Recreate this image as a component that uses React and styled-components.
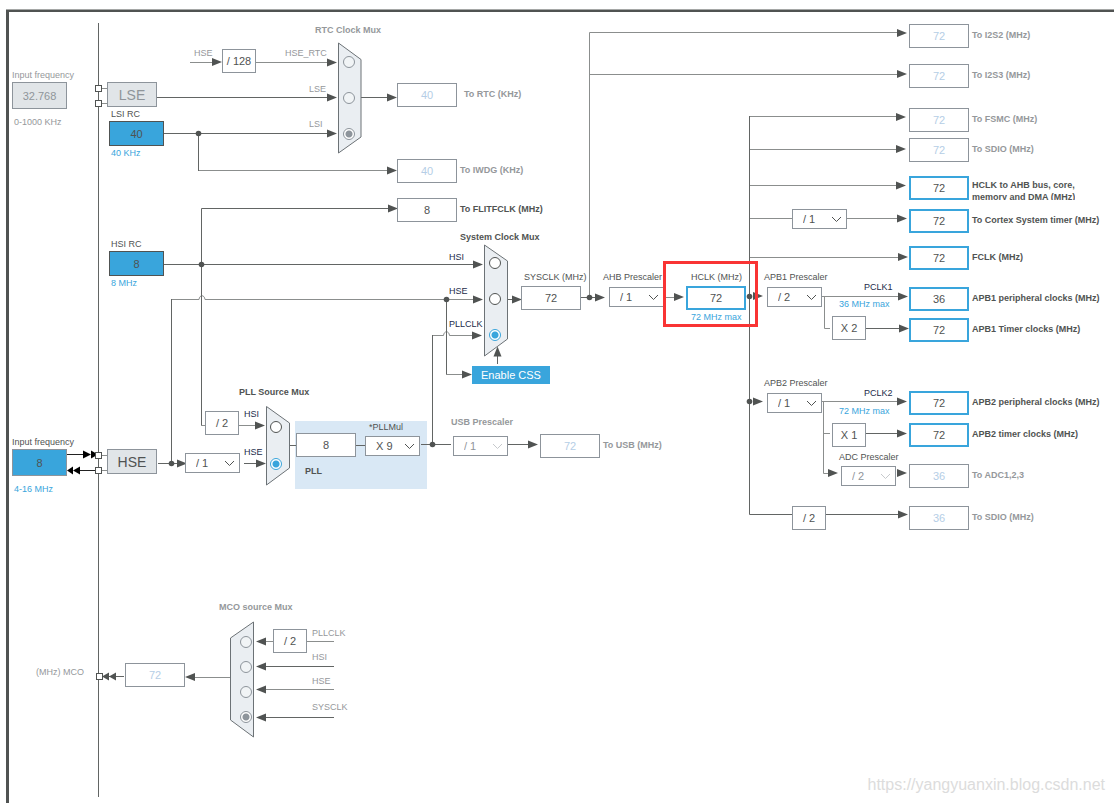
import React, { useState } from "react";
import styled, { createGlobalStyle, css } from "styled-components";

const ink = "#505352";
const muted = "#95989b";
const blue = "#39a5dc";
const edge = "#8d949b";

const GlobalStyle = createGlobalStyle`
  * {
    box-sizing: border-box;
  }

  body {
    margin: 0;
    background: #fff;
    color: ${ink};
    font-family: "Liberation Sans", Arial, sans-serif;
    font-size: 9px;
  }
`;

const Canvas = styled.main`
  position: relative;
  min-height: 100vh;
  overflow: hidden;

  &::before {
    content: "";
    position: absolute;
    inset: 10px 0 0 6px;
    border-left: 3px solid ${ink};
    border-top: 2px solid ${ink};
    box-shadow: 0 -1px 0 #a5a7a6;
  }
`;

/* every node of the clock tree sits at its own spot on the canvas */
const node = css`
  position: absolute;
  left: ${(p) => p.$x}px;
  top: ${(p) => p.$y}px;
`;

const Wires = styled.svg`
  position: absolute;
  left: 0;
  top: 0;
  overflow: visible;
  pointer-events: none;
`;

const tones = {
  ink,
  muted,
  blue,
  signal: "#1c2b4a",
};

const Caption = styled.label`
  color: ${(p) => tones[p.$tone || "ink"]};
  font-weight: ${(p) => (p.$bold ? 700 : 400)};
  line-height: 12px;
  white-space: pre;
`;

const FreeCaption = styled(Caption)`
  ${node}
`;

/* caption above, control, optional limit below */
const Stack = styled.div`
  ${node}
  display: flex;
  flex-direction: column;
  align-items: flex-start;
`;

const StackTitle = styled(Caption)`
  padding-left: ${(p) => p.$indent || 0}px;
  margin-bottom: ${(p) => p.$gap}px;
`;

const StackHint = styled(Caption)`
  padding-left: ${(p) => p.$indent || 0}px;
  margin-top: ${(p) => p.$gap}px;
`;

/* frequency box with its name on the right */
const OutputRow = styled.div`
  ${node}
  display: flex;
  align-items: center;
  gap: ${(p) => p.$gap || 3}px;
`;

const OutputName = styled(Caption)`
  padding-bottom: 2px;
  ${(p) =>
    p.$clip &&
    css`
      align-self: flex-end;
      height: 21px;
      padding: 0;
      overflow: hidden;
    `}
`;

const Frequency = styled.input`
  width: 60px;
  height: 24px;
  padding: 0;
  border: 1px solid ${edge};
  border-radius: 0;
  background: #fff;
  color: ${(p) => (p.$off ? "#b5cee6" : ink)};
  font: inherit;
  font-size: 11px;
  text-align: center;
  outline: none;
  ${(p) => p.$active && `border: 2px solid ${blue};`}
`;

const FreeFrequency = styled(Frequency)`
  ${node}
`;

const Source = styled(Frequency)`
  width: 55px;
  height: ${(p) => (p.$tall ? 27 : 25)}px;
  border-color: ${(p) => (p.$tall ? edge : ink)};
  background: ${(p) => (p.$off ? "#e1e5e8" : blue)};
  color: ${(p) => (p.$off ? "#8f959a" : ink)};
`;

const Oscillator = styled.div`
  ${node}
  display: flex;
  align-items: center;
  justify-content: center;
  width: 50px;
  height: 25px;
  border: 1px solid ${edge};
  background: #e1e5e8;
  color: ${(p) => (p.$off ? "#8f959a" : ink)};
  font-size: 14px;
`;

const Factor = styled.div`
  ${node}
  display: flex;
  align-items: center;
  justify-content: center;
  width: 34px;
  height: 24px;
  border: 1px solid ${edge};
  background: #fff;
  font-size: 11px;
`;

const PrescalerBox = styled.div`
  display: grid;
  align-items: center;
  width: 55px;
  height: 20px;
  margin-left: ${(p) => p.$shift || 0}px;
  color: ${(p) => (p.$off ? "#8f959a" : ink)};

  select,
  svg {
    grid-area: 1 / 1;
  }

  select {
    appearance: none;
    width: 100%;
    height: 20px;
    padding: 0 0 0 10px;
    border: 1px solid ${edge};
    border-radius: 0;
    background: #fff;
    color: inherit;
    font: inherit;
    font-size: 11px;
  }

  svg {
    justify-self: end;
    margin-right: 5px;
    pointer-events: none;
    opacity: ${(p) => (p.$off ? 0.5 : 1)};
  }
`;

const Radio = styled.input`
  ${node}
  appearance: none;
  width: 12px;
  height: 12px;
  margin: 0;
  border: 1px solid ${(p) => (p.$off ? edge : ink)};
  border-radius: 50%;
  background: ${(p) => (p.$off ? "#f1f4f6" : "#fff")};

  &:checked {
    border-color: ${(p) => (p.$off ? edge : blue)};
    background: radial-gradient(circle, ${(p) => (p.$off ? edge : blue)} 3px, #fff 4px);
  }
`;

const PllPanel = styled.div`
  ${node}
  width: 132px;
  height: 68px;
  background: #d9e8f5;
`;

const CssButton = styled.button`
  ${node}
  width: 78px;
  height: 18px;
  padding: 0;
  border: 0;
  background: ${blue};
  color: #fff;
  font: inherit;
  font-size: 11px;
`;

const Highlight = styled.div`
  ${node}
  width: 95px;
  height: 66px;
  border: 3px solid #f93434;
  pointer-events: none;
`;

const Watermark = styled.a`
  position: absolute;
  right: 9px;
  bottom: 8px;
  color: #dcdcdc;
  font-size: 16px;
  line-height: 20px;
  text-decoration: none;
`;

const darkWires = [
  "M98.5 23V797",
  "M157 97.5H328",
  "M164 133.5H328",
  "M198.5 133V171",
  "M361 97.5H388",
  "M164 264.5H474",
  "M389 208.5H201.5V425",
  "M171.5 463V299",
  "M446.5 299V374",
  "M432.5 444V335",
  "M508 299.5H513",
  "M497.5 364V356",
  "M581 297.5H595",
  "M749.5 116V514.5H792",
  "M158 463.5H178",
  "M244 463.5H256",
  "M290 445.5H296",
  "M356 445.5H365",
  "M421 444.5H451",
  "M508 444.5H528",
  "M866 328.5H900",
  "M866 433.5H898",
  "M826 514.5H898",
  "M109 676.5H124",
  "M266 666.5H334",
  "M266 717.5H334",
];

const lightWires = [
  "M190 62.5H213",
  "M256 62.5H328",
  "M198 170.5H387",
  "M201 425.5H205",
  "M239 425.5H256",
  "M171 299.5H199C199.500 294.500 204.500 294.500 205 299.500H474",
  "M446 374.5H462",
  "M432 335.5H443.500C444 330.500 449 330.500 449.500 335.500H473",
  "M589.5 297V32.5H898",
  "M589 74.5H898",
  "M664 297.5H675",
  "M749 116.5H897",
  "M749 149.5H897",
  "M749 185.5H897",
  "M749 218.5H792",
  "M847 218.5H897",
  "M749 257.5H898",
  "M822 296.5H898",
  "M824.5 296V328.5H830",
  "M822 401.5H898",
  "M823.5 401V473.5H828",
  "M823 433.5H830",
  "M101 88.5H107",
  "M101 103.5H107",
  "M101 455.5H107",
  "M101 470.5H107",
  "M195 677.5H230",
  "M266 641.5H273",
  "M307 641.5H334",
  "M266 689.5H334",
];

const blackWires = ["M67 454.5H84", "M80 470.5H95"];

// [tip x, tip y, direction, length]
const arrows = [
  [222, 62],
  [337, 62.5],
  [337, 97.5],
  [337, 133.5],
  [397, 97.5],
  [397, 170.5],
  [398, 208.5],
  [483, 264.5],
  [483, 299.5],
  [482, 335.5],
  [472, 374.5],
  [522, 299.5],
  [497.5, 346.5, "up"],
  [605, 297.5],
  [684, 297],
  [907, 33],
  [907, 74],
  [906, 117],
  [906, 149],
  [906, 185.5],
  [907, 218.5],
  [908, 257],
  [763, 296],
  [908, 296.5],
  [909, 328.5],
  [763, 401.5],
  [907, 401.5],
  [907, 433.5],
  [838, 473],
  [907, 473],
  [908, 514.5],
  [187, 463.5],
  [266, 463.5],
  [265, 425.5],
  [538, 444.5],
  [102, 676.5, "left", 7],
  [109, 676.5, "left", 7],
  [185, 677, "left"],
  [256, 641.5, "left"],
  [256, 666.5, "left"],
  [256, 689.5, "left"],
  [256, 717.5, "left"],
];

const blackArrows = [
  [91, 454.5, "right", 8],
  [98, 454.5, "right", 7],
  [67, 470.5, "left", 6],
  [73, 470.5, "left", 7],
];

const dots = [
  [198.5, 133.5],
  [201.5, 264.5],
  [446.5, 299.5],
  [171.5, 463.5],
  [432.5, 444.5],
  [589.5, 297.5],
  [749.5, 296.5],
  [749.5, 401.5],
];

const ports = [
  [95.5, 85.5],
  [95.5, 100.5],
  [95.5, 452.5],
  [95.5, 467.5],
  [96.5, 673.5],
];

const muxShapes = [
  "338.5,43 361,59.5 361,137 338.5,153",
  "484.5,245 507.5,261 507.5,339 484.5,356",
  "266.5,406.5 289.5,423 289.5,468 266.5,485",
  "253.5,622 230.5,638 230.5,720 253.5,737",
];

const angle = { right: 0, left: 180, up: -90 };

const Arrow = ({ x, y, dir = "right", size = 10 }) => (
  <polygon
    points={`0,0 ${-size},-4 ${-size},4`}
    transform={`translate(${x} ${y}) rotate(${angle[dir]})`}
  />
);

const captions = [
  { x: 194, y: 47, text: "HSE", tone: "muted" },
  { x: 285, y: 47, text: "HSE_RTC", tone: "muted", id: "rtc-0" },
  { x: 309, y: 83, text: "LSE", tone: "muted", id: "rtc-1" },
  { x: 309, y: 118, text: "LSI", tone: "muted", id: "rtc-2" },
  { x: 315, y: 24, text: "RTC Clock Mux", tone: "muted", bold: true },
  { x: 460, y: 231, text: "System Clock Mux", bold: true },
  { x: 449, y: 251, text: "HSI", tone: "signal", id: "sys-0" },
  { x: 449, y: 285, text: "HSE", tone: "signal", id: "sys-1" },
  { x: 449, y: 318, text: "PLLCLK", tone: "signal", id: "sys-2" },
  { x: 864, y: 281, text: "PCLK1", tone: "signal", id: "pclk1" },
  { x: 839, y: 298, text: "36 MHz max", tone: "blue", id: "pclk1" },
  { x: 864, y: 387, text: "PCLK2", tone: "signal", id: "pclk2" },
  { x: 839, y: 405, text: "72 MHz max", tone: "blue", id: "pclk2" },
  { x: 239, y: 386, text: "PLL Source Mux", bold: true },
  { x: 244, y: 408, text: "HSI", tone: "signal", id: "pll-0" },
  { x: 244, y: 446, text: "HSE", tone: "signal", id: "pll-1" },
  { x: 305, y: 465, text: "PLL", bold: true, id: "pll" },
  { x: 219, y: 601, text: "MCO source Mux", tone: "muted", bold: true },
  { x: 36, y: 666, text: "(MHz) MCO", tone: "muted", id: "mco" },
  { x: 312, y: 627, text: "PLLCLK", tone: "muted", id: "mco-0" },
  { x: 312, y: 651, text: "HSI", tone: "muted", id: "mco-1" },
  { x: 312, y: 675, text: "HSE", tone: "muted", id: "mco-2" },
  { x: 312, y: 701, text: "SYSCLK", tone: "muted", id: "mco-3" },
];

const outputs = [
  { id: "to-rtc", x: 397, y: 83, value: "40", text: "To RTC (KHz)", off: true, gap: 7 },
  { id: "to-iwdg", x: 397, y: 159, value: "40", text: "To IWDG (KHz)", off: true },
  { id: "to-flitf", x: 397, y: 198, value: "8", text: "To FLITFCLK (MHz)", plain: true },
  { id: "to-usb", x: 540, y: 434, value: "72", text: "To USB (MHz)", off: true },
  { id: "i2s2", x: 909, y: 24, value: "72", text: "To I2S2 (MHz)", off: true },
  { id: "i2s3", x: 909, y: 64, value: "72", text: "To I2S3 (MHz)", off: true },
  { id: "fsmc", x: 909, y: 108, value: "72", text: "To FSMC (MHz)", off: true },
  { id: "sdio", x: 909, y: 138, value: "72", text: "To SDIO (MHz)", off: true },
  { id: "ahb-bus", x: 909, y: 176, value: "72", text: "HCLK to AHB bus, core,\nmemory and DMA (MHz)", clip: true },
  { id: "cortex", x: 909, y: 209, value: "72", text: "To Cortex System timer (MHz)" },
  { id: "fclk", x: 909, y: 246, value: "72", text: "FCLK (MHz)" },
  { id: "pclk1", x: 909, y: 287, value: "36", text: "APB1 peripheral clocks (MHz)" },
  { id: "tim1", x: 909, y: 318, value: "72", text: "APB1 Timer clocks (MHz)" },
  { id: "pclk2", x: 909, y: 391, value: "72", text: "APB2 peripheral clocks (MHz)" },
  { id: "tim2", x: 909, y: 423, value: "72", text: "APB2 timer clocks (MHz)" },
  { id: "to-adc", x: 909, y: 464, value: "36", text: "To ADC1,2,3", off: true },
  { id: "sdio2", x: 909, y: 506, value: "36", text: "To SDIO (MHz)", off: true },
];

const inputs = [
  { id: "lse-in", y: 69, value: "32.768", range: "0-1000 KHz", off: true },
  { id: "hse-in", y: 436, value: "8", range: "4-16 MHz" },
];

const internals = [
  { id: "lsi", y: 108, value: "40", title: "LSI RC", range: "40 KHz" },
  { id: "hsi", y: 238, value: "8", title: "HSI RC", range: "8 MHz" },
];

const factors = [
  { x: 222, y: 49, text: "/ 128" },
  { x: 205, y: 411, text: "/ 2" },
  { x: 832, y: 316, text: "X 2" },
  { x: 832, y: 423, text: "X 1" },
  { x: 792, y: 506, text: "/ 2" },
  { x: 273, y: 629, text: "/ 2" },
];

const divs = ["/ 1", "/ 2", "/ 4", "/ 8"];

const prescalers = [
  { id: "hse-div", x: 185, y: 453, value: "/ 1", name: "HSE divider" },
  { id: "cortex-div", x: 792, y: 209, value: "/ 1", name: "Cortex timer divider" },
  { id: "pllmul", x: 365, y: 421, indent: 4, gap: 3, title: "*PLLMul", value: "X 9", options: ["X 2", "X 4", "X 8", "X 9"] },
  { id: "usb", x: 451, y: 416, shift: 2, gap: 8, title: "USB Prescaler", value: "/ 1", off: true, bold: true },
  { id: "ahb", x: 603, y: 271, shift: 6, gap: 4, title: "AHB Prescaler", value: "/ 1" },
  { id: "apb1", x: 764, y: 271, shift: 3, gap: 4, title: "APB1 Prescaler", value: "/ 2" },
  { id: "apb2", x: 764, y: 377, shift: 3, gap: 4, title: "APB2 Prescaler", value: "/ 1" },
  { id: "adc", x: 839, y: 451, shift: 2, gap: 3, title: "ADC Prescaler", value: "/ 2", off: true },
];

const muxes = [
  { id: "rtc", x: 343, ys: [56, 92, 128], selected: 2, off: true },
  { id: "sys", x: 489, ys: [257, 293, 329], selected: 2 },
  { id: "pll", x: 270, ys: [421, 458], selected: 1 },
  { id: "mco", x: 240, ys: [636, 661, 686, 711], selected: 3, off: true },
];

const Prescaler = ({ id, x, y, value, name, title, bold, off, shift, indent, gap, options = divs }) => (
  <Stack $x={x} $y={y}>
    {title && (
      <StackTitle
        htmlFor={id}
        $indent={indent}
        $gap={gap}
        $bold={bold}
        $tone={bold ? "muted" : "ink"}
      >
        {title}
      </StackTitle>
    )}
    <PrescalerBox $shift={shift} $off={off}>
      <select id={id} aria-label={name} defaultValue={value}>
        {options.map((o) => (
          <option key={o}>{o}</option>
        ))}
      </select>
      <svg width="11" height="7" fill="none" stroke="currentColor">
        <path d="M1 1L5.500 5.500L10 1" />
      </svg>
    </PrescalerBox>
  </Stack>
);

const Output = ({ id, x, y, value, text, off, plain, clip, gap }) => (
  <OutputRow $x={x} $y={y} $gap={gap}>
    <Frequency
      id={id}
      $off={off}
      $active={!off && !plain}
      defaultValue={value}
    />
    <OutputName htmlFor={id} $tone={off ? "muted" : "ink"} $clip={clip} $bold>
      {text}
    </OutputName>
  </OutputRow>
);

const Mux = ({ id, x, ys, selected, off }) => {
  const [current, setCurrent] = useState(selected);
  return ys.map((y, i) => (
    <Radio
      key={y}
      type="radio"
      id={`${id}-${i}`}
      name={id}
      checked={current === i}
      onChange={() => setCurrent(i)}
      $x={x}
      $y={y}
      $off={off}
    />
  ));
};

const Wiring = () => (
  <Wires width="1" height="1" fill="none" aria-hidden="true">
    <path d={lightWires.join("")} stroke="#8b8e8d" />
    <path d={darkWires.join("")} stroke="#626564" />
    <path d={blackWires.join("")} stroke="#222" />
    <g fill={ink}>
      {arrows.map(([x, y, dir, size]) => (
        <Arrow key={`${x}-${y}`} x={x} y={y} dir={dir} size={size} />
      ))}
      {dots.map(([x, y]) => (
        <circle key={`${x}-${y}`} cx={x} cy={y} r="2.8" />
      ))}
    </g>
    <g fill="#000">
      {blackArrows.map(([x, y, dir, size]) => (
        <Arrow key={x} x={x} y={y} dir={dir} size={size} />
      ))}
    </g>
    <g fill="#fff" stroke={ink}>
      {ports.map(([x, y]) => (
        <rect key={y} x={x} y={y} width="6" height="6" />
      ))}
    </g>
    <g fill="#eaeef2" stroke="#6c7276">
      {muxShapes.map((points) => (
        <polygon key={points} points={points} />
      ))}
    </g>
  </Wires>
);

const App = () => (
  <>
    <GlobalStyle />
    <Canvas>
      <PllPanel $x={295} $y={421} />
      <Wiring />

      {inputs.map((s) => (
        <Stack key={s.id} $x={12} $y={s.y}>
          <StackTitle htmlFor={s.id} $gap={1} $tone={s.off ? "muted" : "ink"}>
            Input frequency
          </StackTitle>
          <Source id={s.id} $tall $off={s.off} defaultValue={s.value} />
          <StackHint
            htmlFor={s.id}
            $indent={2}
            $gap={7}
            $tone={s.off ? "muted" : "blue"}
          >
            {s.range}
          </StackHint>
        </Stack>
      ))}
      {internals.map((s) => (
        <Stack key={s.id} $x={109} $y={s.y}>
          <StackTitle htmlFor={s.id} $indent={2} $gap={1}>
            {s.title}
          </StackTitle>
          <Source id={s.id} defaultValue={s.value} />
          <StackHint htmlFor={s.id} $indent={2} $gap={1} $tone="blue">
            {s.range}
          </StackHint>
        </Stack>
      ))}
      <Oscillator $x={107} $y={82} $off>
        LSE
      </Oscillator>
      <Oscillator $x={107} $y={449}>
        HSE
      </Oscillator>

      {factors.map((f) => (
        <Factor key={`${f.x}-${f.y}`} $x={f.x} $y={f.y}>
          {f.text}
        </Factor>
      ))}
      {prescalers.map((p) => (
        <Prescaler key={p.id} {...p} />
      ))}
      {muxes.map((m) => (
        <Mux key={m.id} {...m} />
      ))}

      <Stack $x={521} $y={271}>
        <StackTitle htmlFor="sysclk" $indent={3} $gap={3}>
          SYSCLK (MHz)
        </StackTitle>
        <Frequency id="sysclk" defaultValue="72" />
      </Stack>
      <Stack $x={686} $y={271}>
        <StackTitle htmlFor="hclk" $indent={5} $gap={3}>
          HCLK (MHz)
        </StackTitle>
        <Frequency id="hclk" $active defaultValue="72" />
        <StackHint htmlFor="hclk" $indent={5} $gap={1} $tone="blue">
          72 MHz max
        </StackHint>
      </Stack>
      <FreeFrequency id="pll" $x={296} $y={433} defaultValue="8" />
      <FreeFrequency id="mco" $x={125} $y={663} $off defaultValue="72" />

      {outputs.map((o) => (
        <Output key={o.id} {...o} />
      ))}
      {captions.map((c) => (
        <FreeCaption
          key={`${c.x}-${c.y}`}
          as={c.id ? "label" : "span"}
          htmlFor={c.id}
          $x={c.x}
          $y={c.y}
          $tone={c.tone}
          $bold={c.bold}
        >
          {c.text}
        </FreeCaption>
      ))}

      <CssButton type="button" $x={472} $y={366}>
        Enable CSS
      </CssButton>
      <Highlight $x={663} $y={261} />
      <Watermark href="https://yangyuanxin.blog.csdn.net">
        https://yangyuanxin.blog.csdn.net
      </Watermark>
    </Canvas>
  </>
);

export default App;
